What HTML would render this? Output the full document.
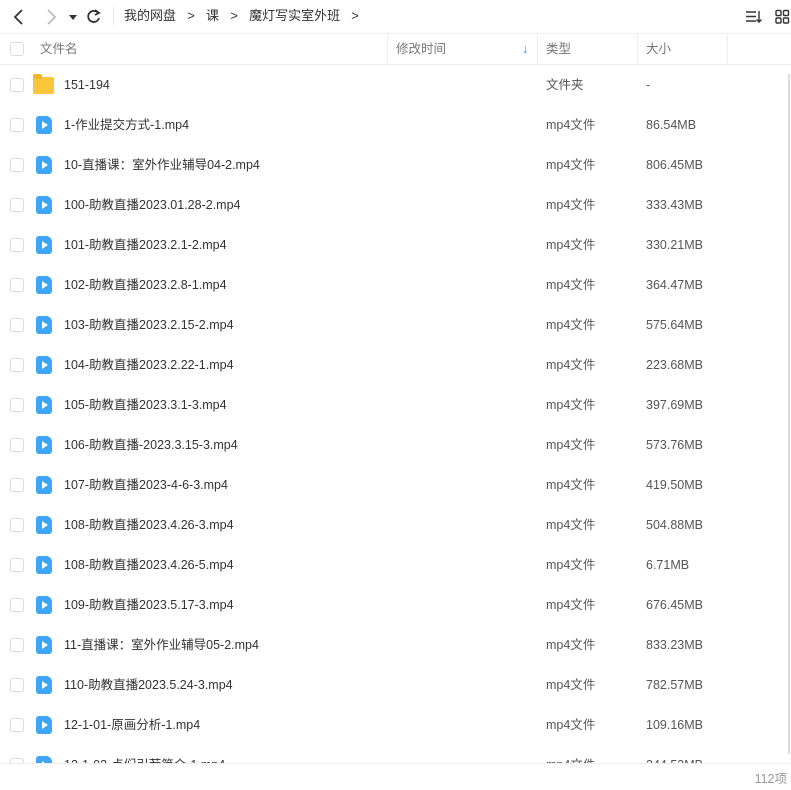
<!DOCTYPE html>
<html><head><meta charset="utf-8"><style>
body{margin:0;width:791px;height:789px;overflow:hidden;background:#fff;font-family:"Liberation Sans","Noto Sans CJK SC",sans-serif;color:#333;font-size:12.5px;line-height:16px;position:relative}
div,span{line-height:16px}
.top{position:absolute;top:0;left:0;width:791px;height:33px;border-bottom:1px solid #eee}
.bc{position:absolute;left:124px;top:8px;font-size:13px;color:#333;word-spacing:2px}
.hd{position:absolute;top:34px;left:0;width:791px;height:30px;border-bottom:1px solid #eee;color:#777;font-size:12.5px}
.hd span{position:absolute;top:7px}
.vl{position:absolute;top:0;width:1px;height:30px;background:#eee}
.cb{position:absolute;left:10px;width:12px;height:12px;border:1px solid #ddd;border-radius:3px}
.row{position:absolute;left:0;width:791px;height:40px}
.row .cb{top:13px}
.ic{position:absolute;left:36px;top:11px;width:16px;height:18px;background:#3ea6f8;border-radius:3px 6px 3px 3px}
.ic:after{content:"";position:absolute;left:6px;top:5px;border-left:6px solid #fff;border-top:4px solid transparent;border-bottom:4px solid transparent}
.fd{position:absolute;left:33px;top:12px;width:21px;height:17px;background:#fbc73a;border-radius:2px}
.fd:before{content:"";position:absolute;left:0;top:-3px;width:9px;height:5px;background:#f5b52a;border-radius:2px 2px 0 0}
.n,.t,.s{position:absolute;top:12px;height:16px;white-space:nowrap}
.n{left:64px}
.t{left:546px;color:#555}
.s{left:646px;color:#555}
.foot{position:absolute;top:763px;left:0;width:791px;height:26px;background:#fff;border-top:1px solid #eee}
</style></head><body>
<div class="top">
<svg style="position:absolute;left:10px;top:7px" width="100" height="20" viewBox="0 0 100 20" fill="none" stroke-width="1.8">
<path d="M12 3 L5 10 L12 17" stroke="#333"/>
<path d="M38 3 L45 10 L38 17" stroke="#bbb"/>
<path d="M59 8 L67 8 L63 13 Z" fill="#333" stroke="none"/>
<path d="M88 6 A5.5 5.5 0 1 0 89 11" stroke="#333"/>
<path d="M85 3 L89 6 L85 8" stroke="#333"/>
</svg>
<div style="position:absolute;left:113px;top:7px;width:1px;height:18px;background:#e5e5e5"></div>
<div class="bc">我的网盘 &nbsp;&gt;&nbsp; 课 &nbsp;&gt;&nbsp; 魔灯写实室外班 &nbsp;&gt;</div>
<svg style="position:absolute;left:745px;top:9px" width="46" height="16" viewBox="0 0 46 16" fill="none" stroke="#333" stroke-width="1.4">
<path d="M1 3H11M1 7.5H11M1 12H11M14 2V13M11.5 10.5L14 13L16.5 10.5"/>
<rect x="31" y="1.5" width="5" height="5" rx="1"/><rect x="38.5" y="1.5" width="5" height="5" rx="1"/>
<rect x="31" y="9" width="5" height="5" rx="1"/><rect x="38.5" y="9" width="5" height="5" rx="1"/>
</svg>
</div>
<div class="hd">
<div class="cb" style="top:8px"></div>
<span style="left:40px">文件名</span>
<div class="vl" style="left:387px"></div>
<span style="left:396px">修改时间</span>
<span style="left:522px;color:#1a8cf0;font-weight:bold">↓</span>
<div class="vl" style="left:537px"></div>
<span style="left:546px">类型</span>
<div class="vl" style="left:637px"></div>
<span style="left:646px">大小</span>
<div class="vl" style="left:727px"></div>
</div>
<div class="row" style="top:65px"><div class="cb"></div><div class="fd"></div><div class="n">151-194</div><div class="t">文件夹</div><div class="s">-</div></div>
<div class="row" style="top:105px"><div class="cb"></div><div class="ic"></div><div class="n">1-作业提交方式-1.mp4</div><div class="t">mp4文件</div><div class="s">86.54MB</div></div>
<div class="row" style="top:145px"><div class="cb"></div><div class="ic"></div><div class="n">10-直播课：室外作业辅导04-2.mp4</div><div class="t">mp4文件</div><div class="s">806.45MB</div></div>
<div class="row" style="top:185px"><div class="cb"></div><div class="ic"></div><div class="n">100-助教直播2023.01.28-2.mp4</div><div class="t">mp4文件</div><div class="s">333.43MB</div></div>
<div class="row" style="top:225px"><div class="cb"></div><div class="ic"></div><div class="n">101-助教直播2023.2.1-2.mp4</div><div class="t">mp4文件</div><div class="s">330.21MB</div></div>
<div class="row" style="top:265px"><div class="cb"></div><div class="ic"></div><div class="n">102-助教直播2023.2.8-1.mp4</div><div class="t">mp4文件</div><div class="s">364.47MB</div></div>
<div class="row" style="top:305px"><div class="cb"></div><div class="ic"></div><div class="n">103-助教直播2023.2.15-2.mp4</div><div class="t">mp4文件</div><div class="s">575.64MB</div></div>
<div class="row" style="top:345px"><div class="cb"></div><div class="ic"></div><div class="n">104-助教直播2023.2.22-1.mp4</div><div class="t">mp4文件</div><div class="s">223.68MB</div></div>
<div class="row" style="top:385px"><div class="cb"></div><div class="ic"></div><div class="n">105-助教直播2023.3.1-3.mp4</div><div class="t">mp4文件</div><div class="s">397.69MB</div></div>
<div class="row" style="top:425px"><div class="cb"></div><div class="ic"></div><div class="n">106-助教直播-2023.3.15-3.mp4</div><div class="t">mp4文件</div><div class="s">573.76MB</div></div>
<div class="row" style="top:465px"><div class="cb"></div><div class="ic"></div><div class="n">107-助教直播2023-4-6-3.mp4</div><div class="t">mp4文件</div><div class="s">419.50MB</div></div>
<div class="row" style="top:505px"><div class="cb"></div><div class="ic"></div><div class="n">108-助教直播2023.4.26-3.mp4</div><div class="t">mp4文件</div><div class="s">504.88MB</div></div>
<div class="row" style="top:545px"><div class="cb"></div><div class="ic"></div><div class="n">108-助教直播2023.4.26-5.mp4</div><div class="t">mp4文件</div><div class="s">6.71MB</div></div>
<div class="row" style="top:585px"><div class="cb"></div><div class="ic"></div><div class="n">109-助教直播2023.5.17-3.mp4</div><div class="t">mp4文件</div><div class="s">676.45MB</div></div>
<div class="row" style="top:625px"><div class="cb"></div><div class="ic"></div><div class="n">11-直播课：室外作业辅导05-2.mp4</div><div class="t">mp4文件</div><div class="s">833.23MB</div></div>
<div class="row" style="top:665px"><div class="cb"></div><div class="ic"></div><div class="n">110-助教直播2023.5.24-3.mp4</div><div class="t">mp4文件</div><div class="s">782.57MB</div></div>
<div class="row" style="top:705px"><div class="cb"></div><div class="ic"></div><div class="n">12-1-01-原画分析-1.mp4</div><div class="t">mp4文件</div><div class="s">109.16MB</div></div>
<div class="row" style="top:745px"><div class="cb"></div><div class="ic"></div><div class="n">12-1-02-点们引荐简介-1.mp4</div><div class="t">mp4文件</div><div class="s">244.53MB</div></div>
<div style="position:absolute;left:788px;top:74px;width:2px;height:680px;background:#ddd"></div>
<div class="foot"><span style="position:absolute;right:4px;top:7px;color:#999;font-size:12.5px">112项</span></div>
</body></html>
